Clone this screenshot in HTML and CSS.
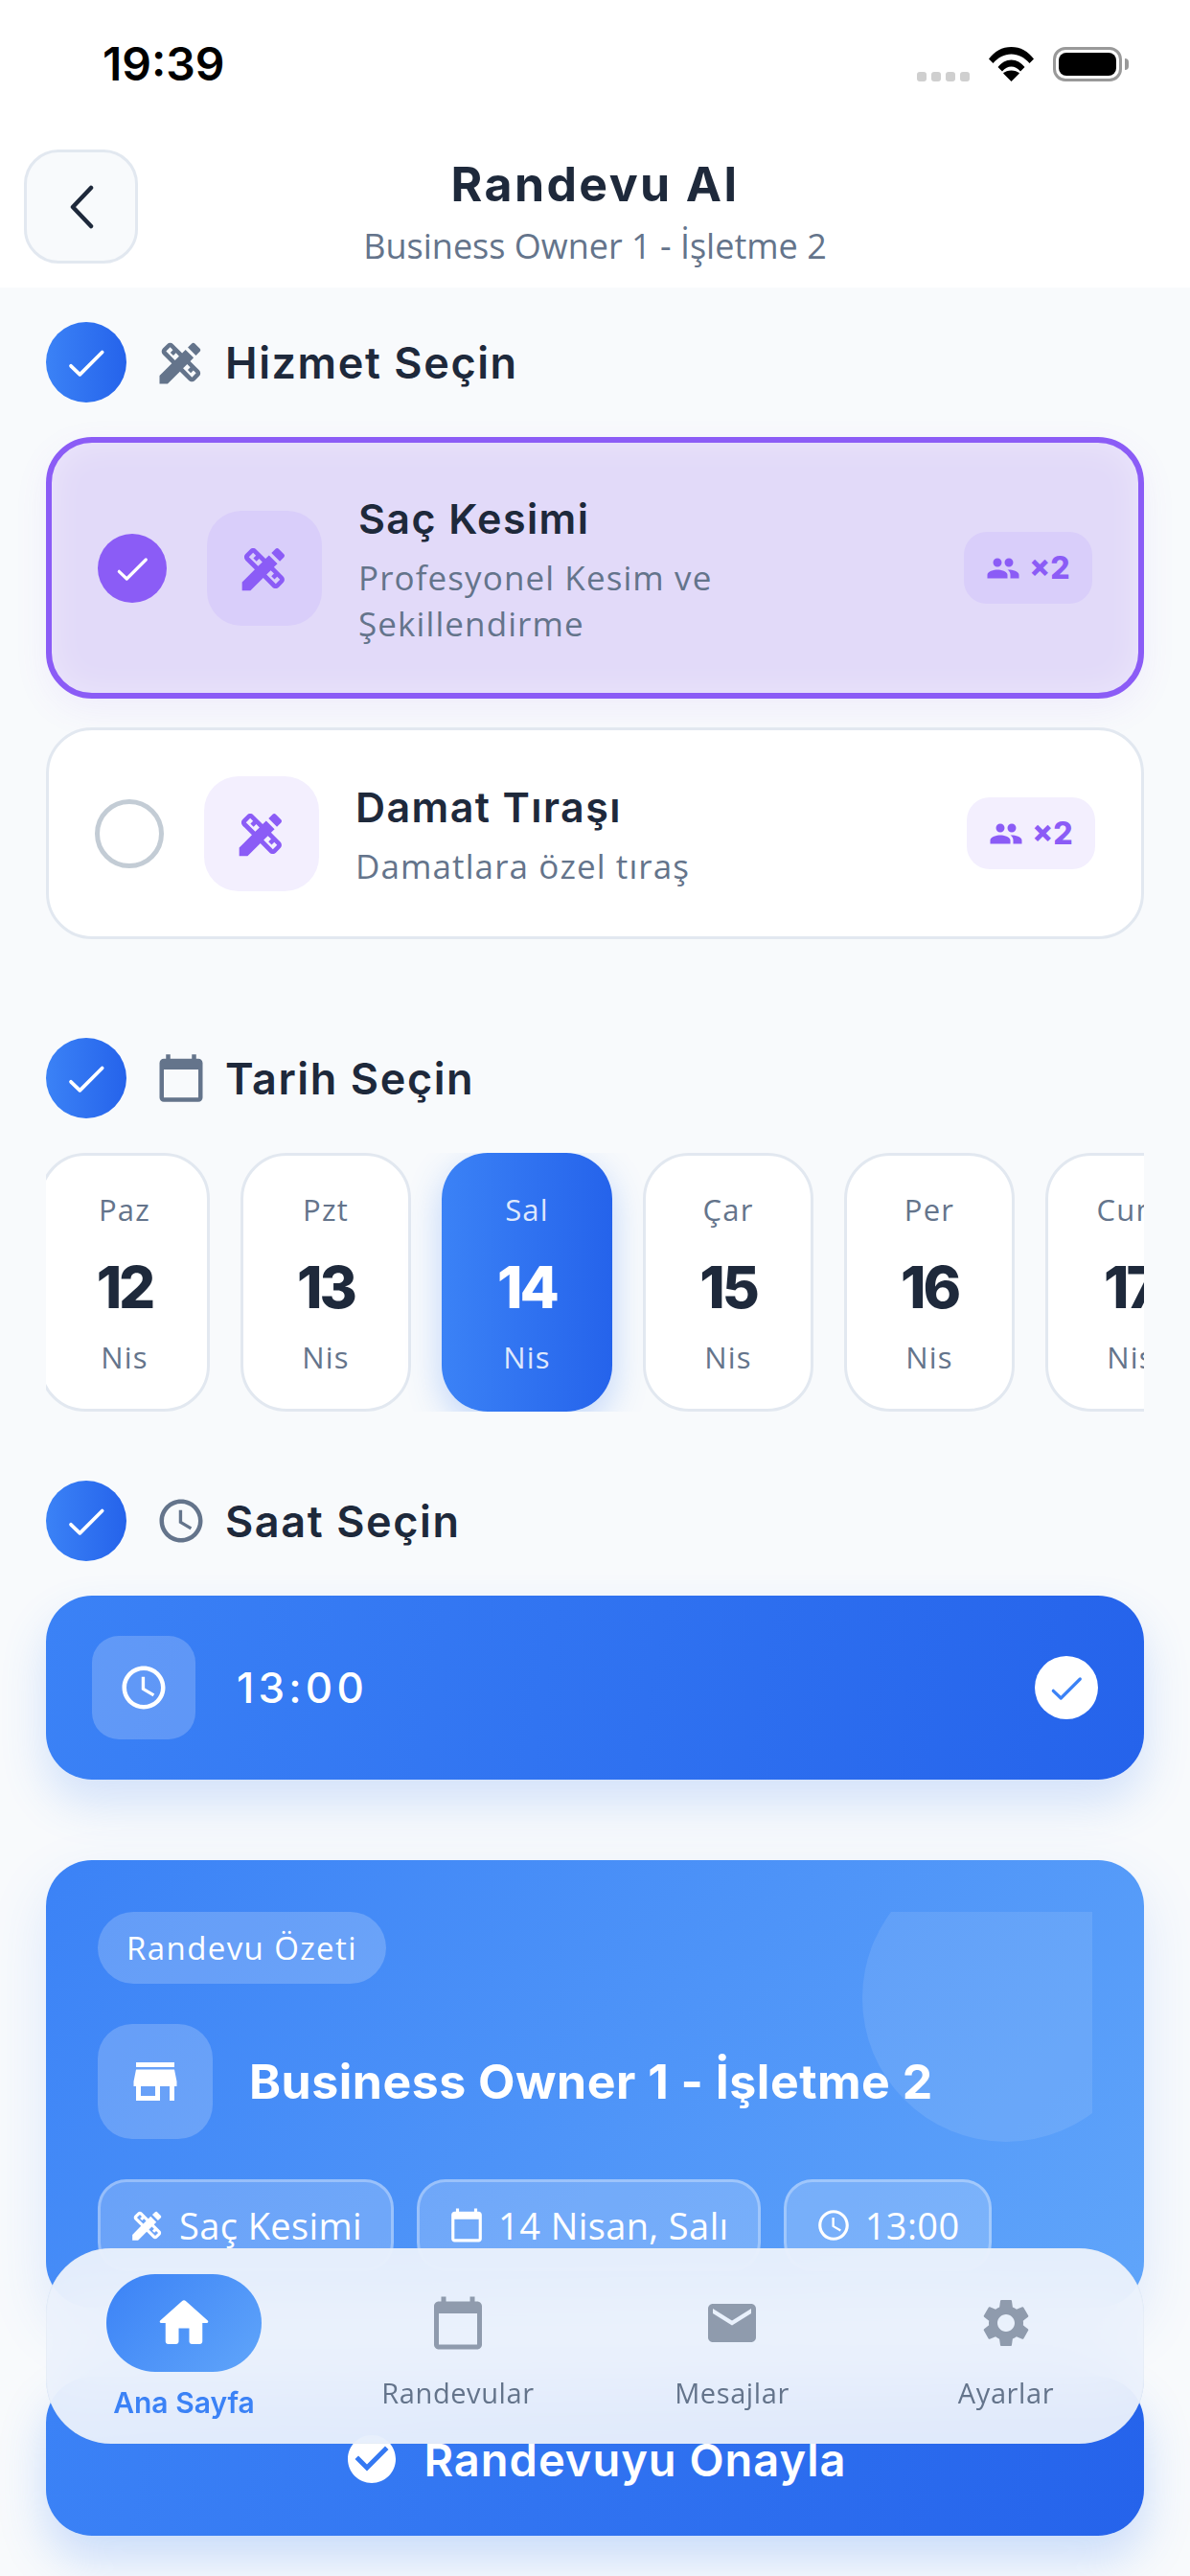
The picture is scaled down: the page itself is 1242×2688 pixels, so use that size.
FILE: index.html
```html
<!DOCTYPE html>
<html lang="tr">
<head>
<meta charset="utf-8">
<title>Randevu Al</title>
<link rel="stylesheet" href="styles.css">
</head>
<body>
<svg class="defs" width="0" height="0" aria-hidden="true">
  <symbol id="i-design" viewBox="0 0 24 24"><path d="M16.24 11.51l1.57-1.57-3.75-3.75-1.57 1.57-4.14-4.13c-.78-.78-2.05-.78-2.83 0L3.56 5.59c-.78.78-.78 2.05 0 2.83l4.13 4.13L2 18.25V22h3.75l5.7-5.7 4.13 4.13c.95.95 2.23.6 2.83 0l1.96-1.96c.78-.78.78-2.05 0-2.83l-4.13-4.13zm-7.06-.44L5.04 6.94l1.89-1.9L8.2 6.31 7.02 7.5l1.41 1.41 1.19-1.19 1.45 1.45-1.89 1.9zm7.88 7.89l-4.13-4.14 1.9-1.9 1.45 1.45-1.19 1.19 1.41 1.41 1.19-1.19 1.27 1.27-1.9 1.91zM20.71 7.04c.39-.39.39-1.02 0-1.41l-2.34-2.34c-.47-.47-1.12-.29-1.41 0l-1.83 1.83 3.75 3.75 1.83-1.83z"/></symbol>
  <symbol id="i-cal" viewBox="0 0 24 24"><path d="M20 3h-1V1h-2v2H7V1H5v2H4c-1.1 0-2 .9-2 2v16c0 1.1.9 2 2 2h16c1.1 0 2-.9 2-2V5c0-1.1-.9-2-2-2zm0 18H4V8h16v13z"/></symbol>
  <symbol id="i-clock" viewBox="0 0 24 24"><path d="M11.99 2C6.47 2 2 6.48 2 12s4.47 10 9.99 10C17.52 22 22 17.52 22 12S17.52 2 11.99 2zM12 20c-4.42 0-8-3.58-8-8s3.58-8 8-8 8 3.58 8 8-3.58 8-8 8zm.5-13H11v6l5.25 3.15.75-1.23-4.5-2.67z"/></symbol>
  <symbol id="i-people" viewBox="0 0 24 24"><path d="M16 11c1.66 0 2.99-1.34 2.99-3S17.66 5 16 5c-1.66 0-3 1.34-3 3s1.34 3 3 3zm-8 0c1.66 0 2.99-1.34 2.99-3S9.66 5 8 5C6.34 5 5 6.34 5 8s1.34 3 3 3zm0 2c-2.33 0-7 1.17-7 3.5V19h14v-2.5c0-2.33-4.67-3.5-7-3.5zm8 0c-.29 0-.62.02-.97.05 1.16.84 1.97 1.97 1.97 3.45V19h6v-2.5c0-2.33-4.67-3.5-7-3.5z"/></symbol>
  <symbol id="i-check" viewBox="0 0 36 36"><path d="M4.3 21.3l8 7.7L32.3 9" fill="none" stroke="currentColor" stroke-width="3.2" stroke-linecap="round" stroke-linejoin="round"/></symbol>
</svg>

<div class="phone">
  <div class="top">
    <div class="status">
      <span class="clock">19:39</span>
      <div class="status-icons">
        <div class="signal"><i></i><i></i><i></i><i></i></div>
        <svg class="wifi" viewBox="0 0 47 36"><path d="M0 12.500C6 4.500 14 0 23.500 0S41 4.500 47 12.500l-4.500 4.500C37 11 31 7.500 23.500 7.500S10 11 4.500 17z"/><path d="M9.500 21C13 16.500 18 13.500 23.500 13.500S34 16.500 37.500 21l-4.500 4.500C30 22 27 20.500 23.500 20.500S17 22 14 25.500z"/><path d="M23.500 36l-8.500-8.500c2-1.800 5.200-3 8.500-3s6.500 1.200 8.500 3z"/></svg>
        <div class="battery"><div class="cell"></div></div>
        <div class="nub"></div>
      </div>
    </div>
    <header class="head">
      <button class="back" type="button" aria-label="Geri">
        <svg viewBox="0 0 30 46" width="30" height="46"><path d="M25 3L6 23l19 20" fill="none" stroke="#1e293b" stroke-width="4.500" stroke-linecap="round" stroke-linejoin="round"/></svg>
      </button>
      <div class="head-text">
        <h1>Randevu Al</h1>
        <p>Business Owner 1 - İşletme 2</p>
      </div>
    </header>
  </div>

  <main class="main">
    <section class="sec sec-service">
      <div class="step">
        <span class="step-dot"><svg class="ic42"><use href="#i-check"/></svg></span>
        <svg class="step-ic"><use href="#i-design"/></svg>
        <h2>Hizmet Seçin</h2>
      </div>
      <div class="svc svc-on">
        <span class="radio radio-on"><svg class="ic36"><use href="#i-check"/></svg></span>
        <span class="svc-ic"><svg class="ic56"><use href="#i-design"/></svg></span>
        <div class="svc-text">
          <h3>Saç Kesimi</h3>
          <p>Profesyonel Kesim ve Şekillendirme</p>
        </div>
        <span class="badge"><svg class="ic36"><use href="#i-people"/></svg><b>×2</b></span>
      </div>
      <div class="svc">
        <span class="radio"></span>
        <span class="svc-ic"><svg class="ic56"><use href="#i-design"/></svg></span>
        <div class="svc-text">
          <h3>Damat Tıraşı</h3>
          <p>Damatlara özel tıraş</p>
        </div>
        <span class="badge"><svg class="ic36"><use href="#i-people"/></svg><b>×2</b></span>
      </div>
    </section>

    <section class="sec sec-date">
      <div class="step">
        <span class="step-dot"><svg class="ic42"><use href="#i-check"/></svg></span>
        <svg class="step-ic"><use href="#i-cal"/></svg>
        <h2>Tarih Seçin</h2>
      </div>
      <div class="dates">
        <div class="date"><span>Paz</span><strong>12</strong><span class="mon">Nis</span></div>
        <div class="date"><span>Pzt</span><strong>13</strong><span class="mon">Nis</span></div>
        <div class="date date-on"><span>Sal</span><strong>14</strong><span class="mon">Nis</span></div>
        <div class="date"><span>Çar</span><strong>15</strong><span class="mon">Nis</span></div>
        <div class="date"><span>Per</span><strong>16</strong><span class="mon">Nis</span></div>
        <div class="date"><span>Cum</span><strong>17</strong><span class="mon">Nis</span></div>
      </div>
    </section>

    <section class="sec sec-time">
      <div class="step">
        <span class="step-dot"><svg class="ic42"><use href="#i-check"/></svg></span>
        <svg class="step-ic"><use href="#i-clock"/></svg>
        <h2>Saat Seçin</h2>
      </div>
      <div class="slot">
        <span class="slot-ic"><svg class="ic54"><use href="#i-clock"/></svg></span>
        <span class="slot-time">13:00</span>
        <span class="slot-check"><svg class="ic36"><use href="#i-check"/></svg></span>
      </div>
    </section>

    <section class="summary">
      <div class="summary-in">
        <span class="deco"></span>
        <span class="pill">Randevu Özeti</span>
        <div class="biz">
          <span class="biz-ic"><svg viewBox="0 0 24 24" class="ic60"><path d="M20 4H4v2h16V4zm1 10v-2l-1-5H4l-1 5v2h1v6h10v-6h4v6h2v-6h1zm-9 4H6v-4h6v4z"/></svg></span>
          <h3>Business Owner 1 - İşletme 2</h3>
        </div>
        <div class="chips">
          <span class="chip"><svg class="ic38"><use href="#i-design"/></svg>Saç Kesimi</span>
          <span class="chip"><svg class="ic38"><use href="#i-cal"/></svg>14 Nisan, Salı</span>
          <span class="chip"><svg class="ic38"><use href="#i-clock"/></svg>13:00</span>
        </div>
      </div>
    </section>

    <button class="confirm" type="button">
      <svg viewBox="0 0 24 24" class="ic60"><path d="M12 2C6.48 2 2 6.48 2 12s4.48 10 10 10 10-4.48 10-10S17.52 2 12 2zm-2 15l-5-5 1.410-1.410L10 14.170l7.590-7.590L19 8l-9 9z"/></svg>
      <span>Randevuyu Onayla</span>
    </button>
  </main>

  <nav class="nav">
    <a class="tab tab-on">
      <span class="tab-pill"><svg viewBox="0 0 24 24" class="ic66"><path d="M10 19v-5h4v5c0 .55.45 1 1 1h3c.55 0 1-.45 1-1v-7h1.700c.46 0 .68-.57.33-.87L12.670 3.600c-.38-.34-.96-.34-1.340 0l-8.360 7.530c-.34.3-.13.87.33.87H5v7c0 .55.45 1 1 1h3c.55 0 1-.45 1-1z"/></svg></span>
      <span class="tab-label">Ana Sayfa</span>
    </a>
    <a class="tab">
      <svg class="ic60"><use href="#i-cal"/></svg>
      <span class="tab-label">Randevular</span>
    </a>
    <a class="tab">
      <svg viewBox="0 0 24 24" class="ic60"><path d="M20 4H4c-1.100 0-1.990.9-1.990 2L2 18c0 1.100.9 2 2 2h16c1.100 0 2-.9 2-2V6c0-1.100-.9-2-2-2zm0 4l-8 5-8-5V6l8 5 8-5v2z"/></svg>
      <span class="tab-label">Mesajlar</span>
    </a>
    <a class="tab">
      <svg viewBox="0 0 24 24" class="ic60"><path d="M19.140 12.940c.04-.3.06-.61.06-.94 0-.32-.02-.64-.07-.94l2.030-1.580c.18-.14.23-.41.12-.61l-1.920-3.320c-.12-.22-.37-.29-.59-.22l-2.390.96c-.5-.38-1.030-.7-1.620-.94l-.36-2.540c-.04-.24-.24-.41-.48-.41h-3.840c-.24 0-.43.17-.47.41l-.36 2.540c-.59.24-1.130.57-1.620.94l-2.390-.96c-.22-.08-.47 0-.59.22L2.740 8.870c-.12.21-.08.47.12.61l2.030 1.580c-.05.3-.09.63-.09.94s.02.64.07.94l-2.030 1.580c-.18.14-.23.41-.12.61l1.920 3.320c.12.22.37.29.59.22l2.390-.96c.5.38 1.030.7 1.620.94l.36 2.540c.05.24.24.41.48.41h3.840c.24 0 .44-.17.47-.41l.36-2.540c.59-.24 1.130-.56 1.620-.94l2.390.96c.22.08.47 0 .59-.22l1.920-3.320c.12-.22.07-.47-.12-.61l-2.010-1.580zM12 15.600c-1.980 0-3.600-1.620-3.600-3.600s1.620-3.600 3.600-3.600 3.600 1.620 3.600 3.600-1.620 3.600-3.600 3.600z"/></svg>
      <span class="tab-label">Ayarlar</span>
    </a>
  </nav>
</div>
</body>
</html>
```

FILE: styles.css
```css
* { box-sizing: border-box; margin: 0; padding: 0; }
html, body { width: 1242px; height: 2688px; overflow: hidden; }
body { background: #f8fafc; font-family: "Open Sans", "Noto Sans", sans-serif; color: #1e293b; }
.defs { position: absolute; }
svg { fill: currentColor; display: block; flex: none; }

.ic36 { width: 36px; height: 36px; }
.ic38 { width: 38px; height: 38px; }
.ic42 { width: 42px; height: 42px; }
.ic54 { width: 54px; height: 54px; }
.ic56 { width: 56px; height: 56px; }
.ic60 { width: 60px; height: 60px; }
.ic66 { width: 66px; height: 66px; }

.phone { position: relative; width: 1242px; height: 2688px; overflow: hidden; }
.top { background: #fff; height: 300px; }

.status { height: 156px; display: flex; justify-content: space-between; padding: 36px 64px 0 107px; }
.clock { font-family: "Inter", sans-serif; font-weight: 600; font-size: 48px; line-height: 62px; height: 62px; color: #000; }
.status-icons { display: flex; align-items: flex-start; padding-top: 13px; }
.signal { display: flex; gap: 5px; margin-top: 26px; margin-right: 20px; }
.signal i { width: 10px; height: 10px; border-radius: 3px; background: #cfcfcf; }
.wifi { width: 47px; height: 36px; fill: #000; margin-right: 20px; }
.battery { width: 72px; height: 36px; border: 3px solid #999; border-radius: 13px; padding: 3px; }
.cell { width: 100%; height: 100%; background: #000; border-radius: 8px; }
.nub { width: 4px; height: 12px; background: #999; border-radius: 0 4px 4px 0; margin: 12px 0 0 3px; }

.head { position: relative; height: 144px; display: flex; justify-content: center; }
.back { position: absolute; left: 25px; top: 0; width: 119px; height: 119px; border: 3px solid #e2e8f0; border-radius: 36px; background: #f8fafc; display: flex; align-items: center; justify-content: center; }
.head-text { text-align: center; }
.head h1 { font-family: "Inter", sans-serif; font-weight: 700; font-size: 50px; letter-spacing: 2.4px; line-height: 60px; margin-top: 6px; }
.head p { font-size: 36px; line-height: 50px; color: #64748b; margin-top: 10px; }

.main { padding: 0 48px; }
.sec-service { padding-top: 36px; }
.sec-date { padding-top: 103px; }
.sec-time { padding-top: 72px; }

.step { display: flex; align-items: center; height: 84px; }
.step-dot { width: 84px; height: 84px; border-radius: 50%; background: linear-gradient(90deg, #3b82f6, #2563eb); color: #fff; display: flex; align-items: center; justify-content: center; }
.step-ic { width: 54px; height: 54px; color: #64748b; margin-left: 30px; }
.step h2 { font-family: "Inter", sans-serif; font-weight: 600; font-size: 45px; letter-spacing: 1.6px; line-height: 60px; margin-left: 19px; padding-top: 2px; }

.svc { display: flex; align-items: center; margin-top: 36px; height: 221px; padding: 0 48px; background: #fff; border: 3px solid #e2e8f0; border-radius: 48px; }
.svc + .svc { margin-top: 30px; }
.svc-on { height: 273px; border: 6px solid #8b5cf6; background: #e2daf9; box-shadow: inset 0 0 36px rgba(255,255,255,.35), 0 12px 36px rgba(139,92,246,.08); }
.radio { width: 72px; height: 72px; border-radius: 50%; border: 5px solid #c3ccd5; display: flex; align-items: center; justify-content: center; flex: none; }
.radio-on { border: 0; background: #8b5cf6; color: #fff; }
.svc-ic { width: 120px; height: 120px; margin-left: 42px; border-radius: 36px; background: #f3effe; color: #8b5cf6; display: flex; align-items: center; justify-content: center; flex: none; }
.svc-on .svc-ic { background: #d9cefa; }
.svc-text { width: 480px; margin-left: 38px; }
.svc-text h3 { font-family: "Inter", sans-serif; font-weight: 600; font-size: 43px; letter-spacing: 1.4px; line-height: 60px; margin-bottom: 8px; }
.svc-text p { font-size: 35px; line-height: 48px; color: #64748b; letter-spacing: 1.1px; }
.badge { margin-left: auto; width: 134px; height: 75px; border-radius: 24px; background: #f3effe; color: #8b5cf6; display: flex; align-items: center; justify-content: center; gap: 9px; }
.svc-on .badge { background: #d9cefa; }
.badge b { font-family: "Inter", sans-serif; font-weight: 800; font-size: 32px; }

.dates { display: flex; gap: 32px; margin-top: 36px; height: 270px; overflow: hidden; }
.date { flex: none; width: 178px; height: 270px; border: 3px solid #e2e8f0; border-radius: 48px; background: #fff; display: flex; flex-direction: column; align-items: center; padding-top: 34px; font-size: 31px; line-height: 45px; letter-spacing: 1.2px; color: #64748b; }
.date:first-child { margin-left: -7px; }
.date strong { font-family: "Inter", sans-serif; font-weight: 800; font-size: 60px; line-height: 90px; margin-top: 13px; color: #1e293b; letter-spacing: -3px; }
.mon { margin-top: 6px; }
.date-on { border: 0; padding-top: 37px; background: linear-gradient(90deg, #3b82f6, #2563eb); color: rgba(255,255,255,.85); box-shadow: 0 12px 36px rgba(59,130,246,.3); }
.date-on strong { color: #fff; }

.slot { display: flex; align-items: center; margin-top: 36px; height: 192px; padding: 0 48px; border-radius: 48px; color: #fff; background: linear-gradient(100deg, #3b82f6, #2563eb); box-shadow: 0 24px 48px rgba(59,130,246,.2); }
.slot-ic { width: 108px; height: 108px; border-radius: 28px; background: rgba(255,255,255,.2); display: flex; align-items: center; justify-content: center; }
.slot-time { font-family: "Inter", sans-serif; font-weight: 500; font-size: 44px; letter-spacing: 4.2px; margin-left: 43px; }
.slot-check { margin-left: auto; width: 66px; height: 66px; border-radius: 50%; background: #fff; color: #3b82f6; display: flex; align-items: center; justify-content: center; }

.summary { margin-top: 84px; height: 467px; padding: 54px 54px 0; border-radius: 48px; background: linear-gradient(135deg, #3b82f6, #60a5fa); box-shadow: 0 24px 60px rgba(59,130,246,.15); color: #fff; }
.summary-in { position: relative; height: 378px; overflow: hidden; }
.deco { position: absolute; left: 798px; top: -60px; width: 300px; height: 300px; border-radius: 50%; background: rgba(255,255,255,.1); }
.pill { position: relative; display: inline-block; height: 75px; padding: 0 30px; border-radius: 38px; background: rgba(255,255,255,.2); font-size: 33px; line-height: 75px; letter-spacing: 1.4px; }
.biz { position: relative; display: flex; align-items: center; margin-top: 42px; }
.biz-ic { width: 120px; height: 120px; border-radius: 36px; background: rgba(255,255,255,.2); display: flex; align-items: center; justify-content: center; flex: none; }
.biz h3 { font-family: "Inter", sans-serif; font-weight: 700; font-size: 50px; letter-spacing: .5px; margin-left: 38px; }
.chips { position: relative; display: flex; gap: 24px; margin-top: 42px; }
.chip { display: flex; align-items: center; gap: 14px; height: 96px; padding: 0 30px; border: 3px solid rgba(255,255,255,.3); border-radius: 30px; background: rgba(255,255,255,.2); font-size: 38px; letter-spacing: .4px; white-space: nowrap; }

.confirm { display: flex; align-items: center; justify-content: center; gap: 24px; width: 100%; height: 166px; margin-top: 72px; padding-top: 6px; border: 0; border-radius: 48px; color: #fff; background: linear-gradient(100deg, #3b82f6, #2563eb); box-shadow: 0 24px 48px rgba(59,130,246,.25); font-family: "Inter", sans-serif; font-weight: 600; font-size: 47px; letter-spacing: 1px; }

.nav { position: absolute; left: 48px; top: 2346px; width: 1146px; height: 204px; display: flex; align-items: center; border-radius: 68px; background: rgba(238,243,252,.93); backdrop-filter: blur(40px); border: 1px solid rgba(226,232,240,.4); }
.tab { flex: 1; display: flex; flex-direction: column; align-items: center; color: #8f9bad; padding-top: 16px; }
.tab-label { font-size: 29px; line-height: 42px; color: #64748b; margin-top: 22px; letter-spacing: .6px; }
.tab-on { padding-top: 4px; }
.tab-pill { width: 162px; height: 102px; border-radius: 51px; background: linear-gradient(135deg, #3b82f6, #60a5fa); color: #fff; display: flex; align-items: center; justify-content: center; }
.tab-on .tab-label { margin-top: 11px; color: #3b82f6; font-family: "Inter", sans-serif; font-size: 30px; font-weight: 600; letter-spacing: 0; }
```
